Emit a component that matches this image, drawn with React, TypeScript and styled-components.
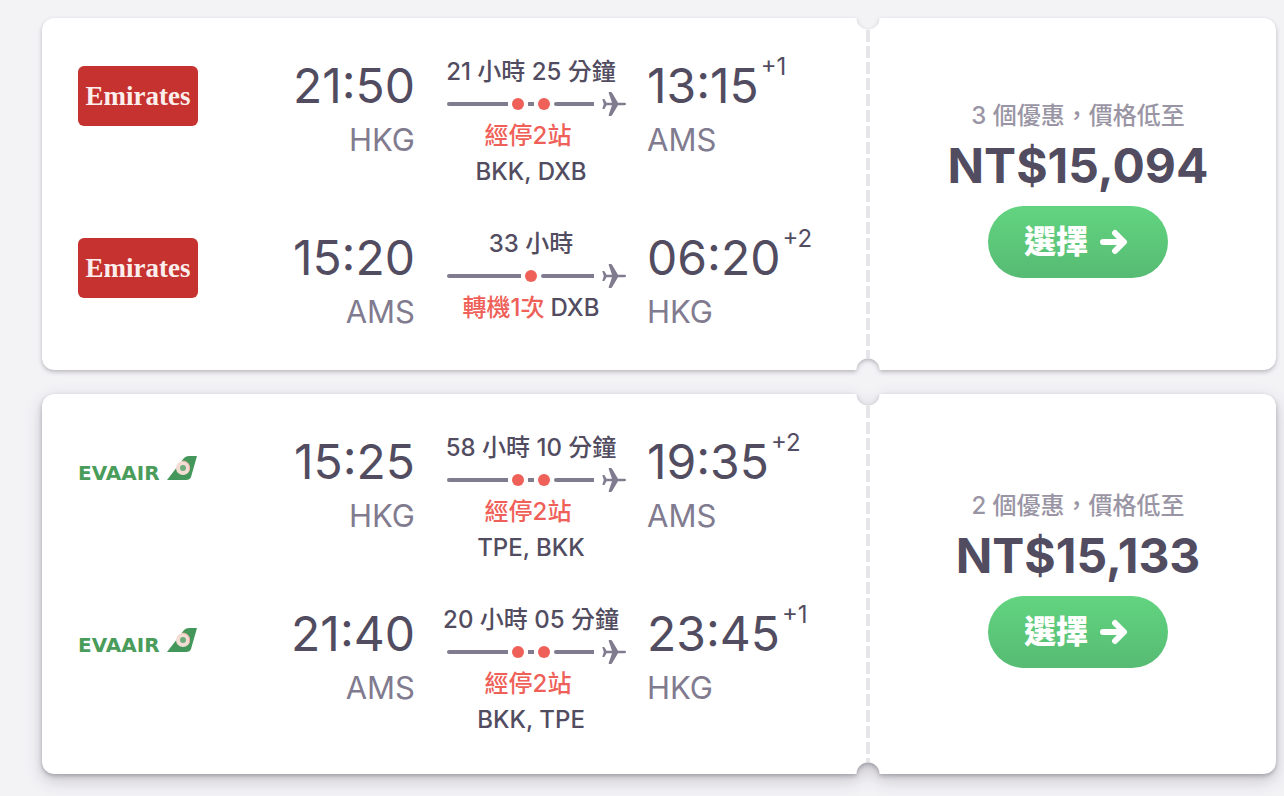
import React from "react";
import styled, { createGlobalStyle } from "styled-components";

const GlobalStyle = createGlobalStyle`
  * { box-sizing: border-box; }
  body {
    margin: 0;
    background: #f3f2f5;
    color: #524c61;
    font-family: Inter, "Noto Sans CJK TC", sans-serif;
    font-size: 24px;
    line-height: 36px;
  }
`;

const Page = styled.main`
  display: flex;
  flex-direction: column;
  gap: 24px;
  min-height: 100vh;
  padding: 18px 8px 22px 42px;
`;

const Ticket = styled.article`
  --stub: 408px;
  position: relative;
  display: grid;
  grid-template-columns: minmax(0, 1fr) var(--stub);
`;

const PaperShadow = styled.div<{ $raised?: boolean }>`
  position: absolute;
  inset: 0;
  z-index: -1;
  filter: ${(p) =>
    p.$raised
      ? "drop-shadow(0 2px 2px rgba(37, 32, 51, 0.28)) drop-shadow(0 6px 8px rgba(37, 32, 51, 0.2))"
      : "drop-shadow(0 2px 2px rgba(37, 32, 51, 0.28))"};
`;

const Paper = styled.div`
  height: 100%;
  border-radius: 12px;
  background: #fff;
  mask:
    radial-gradient(circle at calc(100% - var(--stub)) 0, transparent 11px, #000 12px),
    radial-gradient(circle at calc(100% - var(--stub)) 100%, transparent 11px, #000 12px);
  mask-composite: intersect;
`;

const Legs = styled.div`
  display: flex;
  flex-direction: column;
  gap: 36px;
  padding: 36px;
`;

const LegRow = styled.section`
  display: grid;
  grid-template-columns: 120px minmax(0, 1fr) 168px minmax(0, 1fr);
  column-gap: 32px;
  align-items: start;
`;

const LogoBox = styled.svg`
  display: block;
  width: 120px;
  height: 60px;
  margin-top: 12px;
`;

const Endpoint = styled.div<{ $align: "left" | "right" }>`
  text-align: ${(p) => p.$align};
  white-space: nowrap;
`;

const Clock = styled.div<{ $align: "start" | "end" }>`
  display: flex;
  justify-content: ${(p) => p.$align};
  gap: 2px;
  font-size: 48px;
  line-height: 64px;
`;

const DayOffset = styled.span`
  font-size: 24px;
  line-height: 26px;
`;

const Airport = styled.div`
  color: #817b8f;
  font-size: 31px;
  line-height: 44px;
`;

const Journey = styled.div`
  display: flex;
  flex-direction: column;
  align-items: center;
  font-weight: 500;
  white-space: nowrap;
`;

const Track = styled.div`
  display: flex;
  align-items: center;
  align-self: stretch;
  gap: 4px;
  height: 28px;
`;

const Segment = styled.span`
  flex: 1;
  height: 4px;
  border-radius: 2px 0 0 2px;
  background: #817b8f;
`;

const Link = styled.span`
  width: 6px;
  height: 4px;
  background: #817b8f;
`;

const Dot = styled.span`
  width: 12px;
  height: 12px;
  border-radius: 50%;
  background: #ee6058;
`;

const TrackEnd = styled.span`
  display: flex;
  flex: 1;
  align-items: center;
  gap: 8px;
`;

const Plane = styled.svg`
  flex: none;
  width: 24px;
  height: 24px;
  margin-right: -11px;
`;

const StopCount = styled.span`
  margin-right: 6px;
  color: #ee6058;
`;

const Stub = styled.aside`
  display: flex;
  flex-direction: column;
  align-items: center;
  justify-content: center;
  position: relative;
  padding: 0 0 12px 12px;

  &::before {
    content: "";
    position: absolute;
    top: 12px;
    bottom: 12px;
    left: -2px;
    width: 4px;
    background: repeating-linear-gradient(#e6e5e9 0 12px, transparent 12px 16px);
  }
`;

const Deals = styled.div`
  color: #9a95a4;
  font-weight: 500;
`;

const Price = styled.div`
  font-size: 48px;
  font-weight: 700;
  line-height: 64px;
`;

const SelectButton = styled.button`
  display: flex;
  align-items: center;
  gap: 12px;
  height: 72px;
  margin-top: 8px;
  padding: 0 40px 0 36px;
  border: 0;
  border-radius: 36px;
  background: linear-gradient(#62d480, #56bb73);
  color: #fff;
  font: inherit;
  font-size: 32px;
  font-weight: 800;
  cursor: pointer;
`;

type Airline = "emirates" | "eva";

interface Leg {
  depart: string;
  from: string;
  duration: string;
  stops: number;
  stopLabel: string;
  via: string;
  arrive: string;
  dayOffset: string;
  to: string;
}

interface Offer {
  airline: Airline;
  deals: number;
  price: string;
  legs: Leg[];
}

const offers: Offer[] = [
  {
    airline: "emirates",
    deals: 3,
    price: "NT$15,094",
    legs: [
      { depart: "21:50", from: "HKG", duration: "21 小時 25 分鐘", stops: 2, stopLabel: "經停2站", via: "BKK, DXB", arrive: "13:15", dayOffset: "+1", to: "AMS" },
      { depart: "15:20", from: "AMS", duration: "33 小時", stops: 1, stopLabel: "轉機1次", via: "DXB", arrive: "06:20", dayOffset: "+2", to: "HKG" },
    ],
  },
  {
    airline: "eva",
    deals: 2,
    price: "NT$15,133",
    legs: [
      { depart: "15:25", from: "HKG", duration: "58 小時 10 分鐘", stops: 2, stopLabel: "經停2站", via: "TPE, BKK", arrive: "19:35", dayOffset: "+2", to: "AMS" },
      { depart: "21:40", from: "AMS", duration: "20 小時 05 分鐘", stops: 2, stopLabel: "經停2站", via: "BKK, TPE", arrive: "23:45", dayOffset: "+1", to: "HKG" },
    ],
  },
];

function Logo({ airline }: { airline: Airline }) {
  if (airline === "emirates") {
    return (
      <LogoBox viewBox="0 0 120 60" role="img" aria-label="Emirates">
        <rect width="120" height="60" rx="6" fill="#c6322f" />
        <text x="60" y="39" textAnchor="middle" fill="#fbeeec" fontFamily="'Liberation Serif', serif" fontWeight="700" fontSize="27">
          Emirates
        </text>
      </LogoBox>
    );
  }
  return (
    <LogoBox viewBox="0 0 120 60" role="img" aria-label="EVA AIR">
      <text x="0" y="38" fill="#4a9c5a" fontFamily="'DejaVu Sans', sans-serif" fontWeight="700" fontSize="20">
        EVAAIR
      </text>
      <path d="M89 38 L106 16 Q108 14 111 14 H119 L113 35 Q112 38 108 38 Z" fill="#43975a" />
      <circle cx="105" cy="26" r="7" fill="#f3dcd3" />
      <path d="M105 19a7 7 0 0 1 6 10" fill="none" stroke="#e9a99c" strokeWidth="1" />
      <circle cx="105" cy="26" r="3" fill="#6fae7c" />
    </LogoBox>
  );
}

function LegView({ leg, airline }: { leg: Leg; airline: Airline }) {
  return (
    <LegRow>
      <Logo airline={airline} />
      <Endpoint $align="right">
        <Clock $align="end">{leg.depart}</Clock>
        <Airport>{leg.from}</Airport>
      </Endpoint>
      <Journey>
        <div>{leg.duration}</div>
        <Track>
          <Segment />
          <Dot />
          {leg.stops > 1 && (
            <>
              <Link />
              <Dot />
            </>
          )}
          <TrackEnd>
            <Segment />
            <Plane viewBox="0 0 24 24" aria-hidden="true">
              <path
                d="M24 12c0-.8-.7-1.200-1.500-1.200H16L10.200 1Q9.700 0 8.700 0H7.200q-.8 0-.5.900L10 10.800H4.500L2.700 7.500Q2.400 7 1.800 7H.3l1.500 5L.3 17h1.500q.6 0 .9-.5l1.800-3.300H10L6.700 23.100q-.3.900.5.900h1.500q1 0 1.500-1L16 13.200h6.500c.8 0 1.500-.4 1.500-1.200Z"
                fill="#817b8f"
              />
            </Plane>
          </TrackEnd>
        </Track>
        {leg.stops > 1 ? (
          <>
            <StopCount>{leg.stopLabel}</StopCount>
            <div>{leg.via}</div>
          </>
        ) : (
          <div>
            <StopCount>{leg.stopLabel}</StopCount>
            {leg.via}
          </div>
        )}
      </Journey>
      <Endpoint $align="left">
        <Clock $align="start">
          {leg.arrive}
          <DayOffset>{leg.dayOffset}</DayOffset>
        </Clock>
        <Airport>{leg.to}</Airport>
      </Endpoint>
    </LegRow>
  );
}

export default function App() {
  return (
    <>
      <GlobalStyle />
      <Page>
        {offers.map((offer, index) => (
          <Ticket key={offer.price}>
            <PaperShadow $raised={index === 1}>
              <Paper />
            </PaperShadow>
            <Legs>
              {offer.legs.map((leg) => (
                <LegView key={leg.depart} leg={leg} airline={offer.airline} />
              ))}
            </Legs>
            <Stub>
              <Deals>{offer.deals} 個優惠，價格低至</Deals>
              <Price>{offer.price}</Price>
              <SelectButton type="button">
                選擇
                <svg width="28" height="28" viewBox="0 0 28 28" fill="none" stroke="#fff" strokeWidth="6" strokeLinecap="round" strokeLinejoin="round" aria-hidden="true">
                  <path d="M3 14H23M15 5l9 9-9 9" />
                </svg>
              </SelectButton>
            </Stub>
          </Ticket>
        ))}
      </Page>
    </>
  );
}
